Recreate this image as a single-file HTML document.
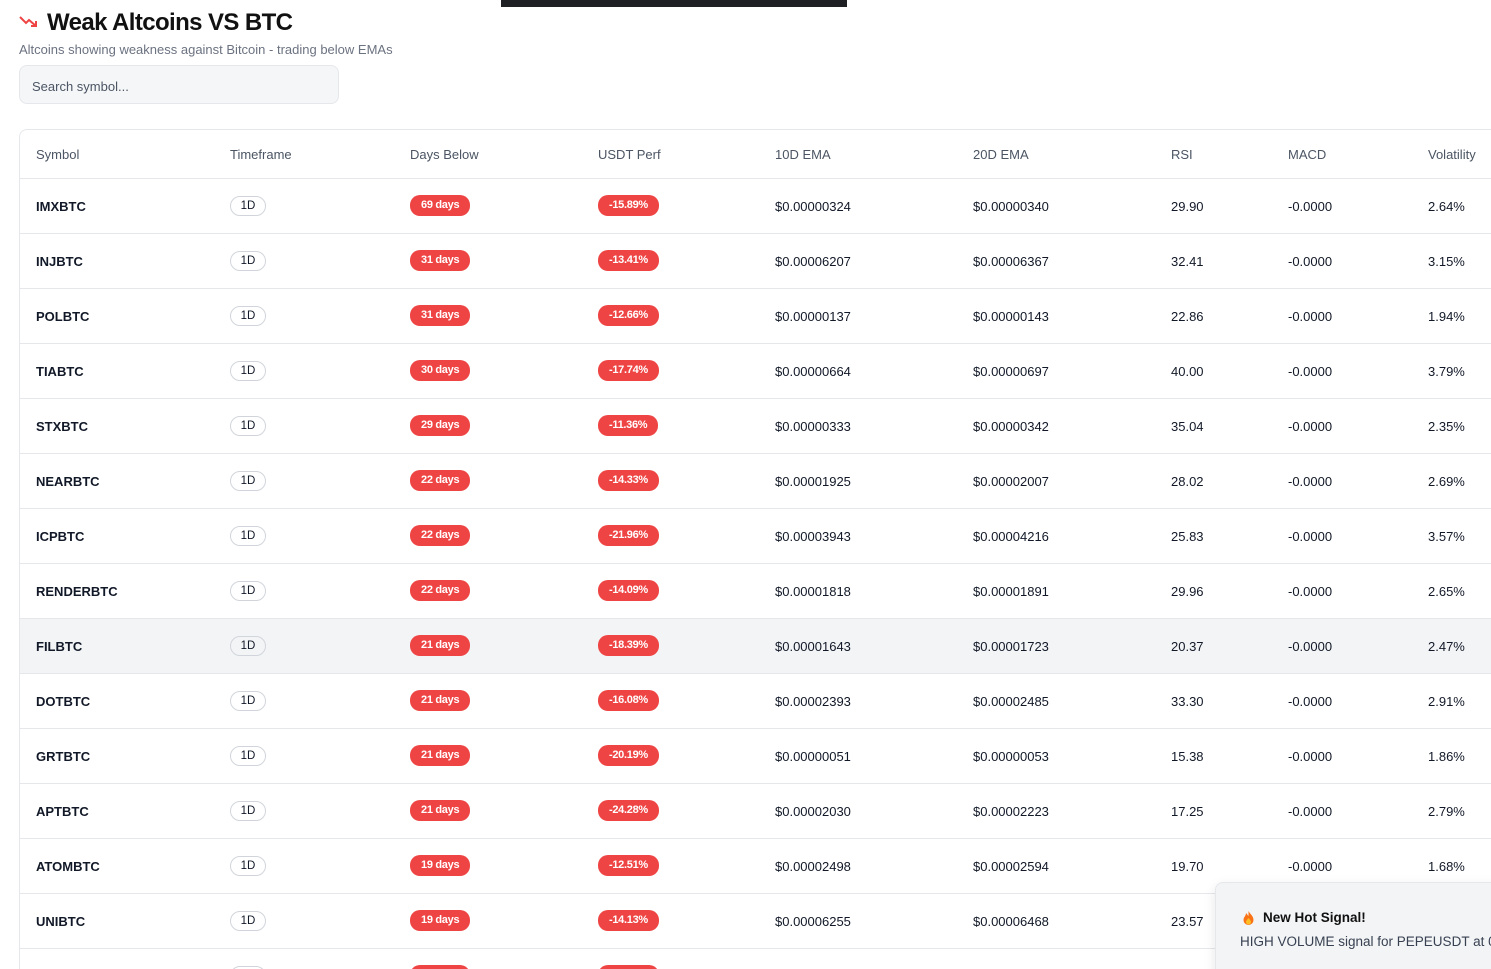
<!DOCTYPE html>
<html><head><style>
html,body{margin:0;width:1491px;height:969px;overflow:hidden}
body{background:#fff;font-family:"Liberation Sans",sans-serif;color:#111827;position:relative}
.bar{position:absolute;left:501px;top:0;width:346px;height:7px;background:#1f2024}
h1{position:absolute;left:47px;top:9px;margin:0;font-size:24px;font-weight:700;letter-spacing:-0.6px;color:#111}
.arrow{position:absolute;left:19px;top:14px}
.sub{position:absolute;left:19px;top:42px;font-size:13px;color:#6b7280}
.search{position:absolute;left:19px;top:65px;width:320px;height:39px;border:1px solid #e5e7eb;border-radius:8px;background:#f5f6f8;box-sizing:border-box;font-size:13px;color:#4b5563;padding:13px 0 0 12px}
.wrap{position:absolute;left:0;top:0;width:1491px;height:969px;overflow:hidden}
.tbl{position:absolute;left:19px;top:129px;width:1490px;height:900px;border:1px solid #e5e7eb;border-radius:8px}
.row{position:absolute;left:20px;width:1471px;height:54px;border-bottom:1px solid #e5e7eb;font-size:13px}
.row span{position:absolute;top:20px}
.hdr{top:129px;height:49px;color:#4b5563}
.hdr span{top:18px}
.sym{font-weight:700}
.tf{display:inline-block;border:1px solid #d1d5db;border-radius:10px;width:36px;height:20px;box-sizing:border-box;text-align:center;font-size:11.5px;line-height:18px;top:17px!important}
.pill{background:#ef4444;color:#fff;border-radius:10px;font-size:11px;font-weight:700;height:21px;line-height:21px;padding:0 11px;top:16px!important;letter-spacing:-0.3px}
.hl{background:#f3f4f6}
.toast{position:absolute;left:1215px;top:882px;width:300px;height:100px;background:#f3f4f6;border:1px solid #e5e7eb;border-radius:8px;box-shadow:0 4px 12px rgba(0,0,0,.1)}
</style></head><body>
<div class="wrap">
<div class="bar"></div>
<svg class="arrow" width="20" height="14" viewBox="0 0 20 14"><path d="M1 3l6 6 3-3 7 6M12 12h5v-5" fill="none" stroke="#ef4444" stroke-width="2"/></svg>
<h1>Weak Altcoins VS BTC</h1>
<div class="sub">Altcoins showing weakness against Bitcoin - trading below EMAs</div>
<div class="search">Search symbol...</div>
<div class="tbl"></div>
<div class="row hdr"><span style="left:16px">Symbol</span><span style="left:210px">Timeframe</span><span style="left:390px">Days Below</span><span style="left:578px">USDT Perf</span><span style="left:755px">10D EMA</span><span style="left:953px">20D EMA</span><span style="left:1151px">RSI</span><span style="left:1268px">MACD</span><span style="left:1408px">Volatility</span></div>
<div id="rows"></div>
<div class="toast"><svg style="position:absolute;left:27px;top:28px" width="11" height="14" viewBox="0 0 11 14"><path d="M5.5 0C7 3 10.5 5 10.5 9a5 5 0 0 1-10 0C.5 6 3 5 3 2c1 1 1.5 2 2.5 3z" fill="#f97316"/><path d="M5.5 7c1 1.5 2.5 2.5 2.5 4a2.5 2.5 0 0 1-5 0c0-1.5 1.5-2.5 2.5-4z" fill="#fbbf24"/></svg><div style="position:absolute;left:47px;top:27px;font-size:13.5px;font-weight:700;color:#111">New Hot Signal!</div><div style="position:absolute;left:24px;top:51px;font-size:13.5px;color:#374151;white-space:nowrap">HIGH VOLUME signal for PEPEUSDT at 0.0</div></div>
</div>
<script>
var d=[["IMXBTC",69,"-15.89","0.00000324","0.00000340","29.90","2.64"],["INJBTC",31,"-13.41","0.00006207","0.00006367","32.41","3.15"],["POLBTC",31,"-12.66","0.00000137","0.00000143","22.86","1.94"],["TIABTC",30,"-17.74","0.00000664","0.00000697","40.00","3.79"],["STXBTC",29,"-11.36","0.00000333","0.00000342","35.04","2.35"],["NEARBTC",22,"-14.33","0.00001925","0.00002007","28.02","2.69"],["ICPBTC",22,"-21.96","0.00003943","0.00004216","25.83","3.57"],["RENDERBTC",22,"-14.09","0.00001818","0.00001891","29.96","2.65"],["FILBTC",21,"-18.39","0.00001643","0.00001723","20.37","2.47"],["DOTBTC",21,"-16.08","0.00002393","0.00002485","33.30","2.91"],["GRTBTC",21,"-20.19","0.00000051","0.00000053","15.38","1.86"],["APTBTC",21,"-24.28","0.00002030","0.00002223","17.25","2.79"],["ATOMBTC",19,"-12.51","0.00002498","0.00002594","19.70","1.68"],["UNIBTC",19,"-14.13","0.00006255","0.00006468","23.57",""],["",19,"-10.00","","","",""]];
var h="";d.forEach(function(r,i){var top=179+i*55;h+='<div class="row'+(i==8?' hl':'')+'" style="top:'+top+'px"><span class="sym" style="left:16px">'+r[0]+'</span><span class="tf" style="left:210px">1D</span><span class="pill" style="left:390px">'+r[1]+' days</span><span class="pill" style="left:578px">'+r[2]+'%</span><span style="left:755px">'+(r[3]?'$'+r[3]:'')+'</span><span style="left:953px">'+(r[4]?'$'+r[4]:'')+'</span><span style="left:1151px">'+r[5]+'</span><span style="left:1268px">'+(r[0]?'-0.0000':'')+'</span><span style="left:1408px">'+(r[6]?r[6]+'%':'')+'</span></div>';});
document.getElementById("rows").innerHTML=h;
</script>
</body></html>
